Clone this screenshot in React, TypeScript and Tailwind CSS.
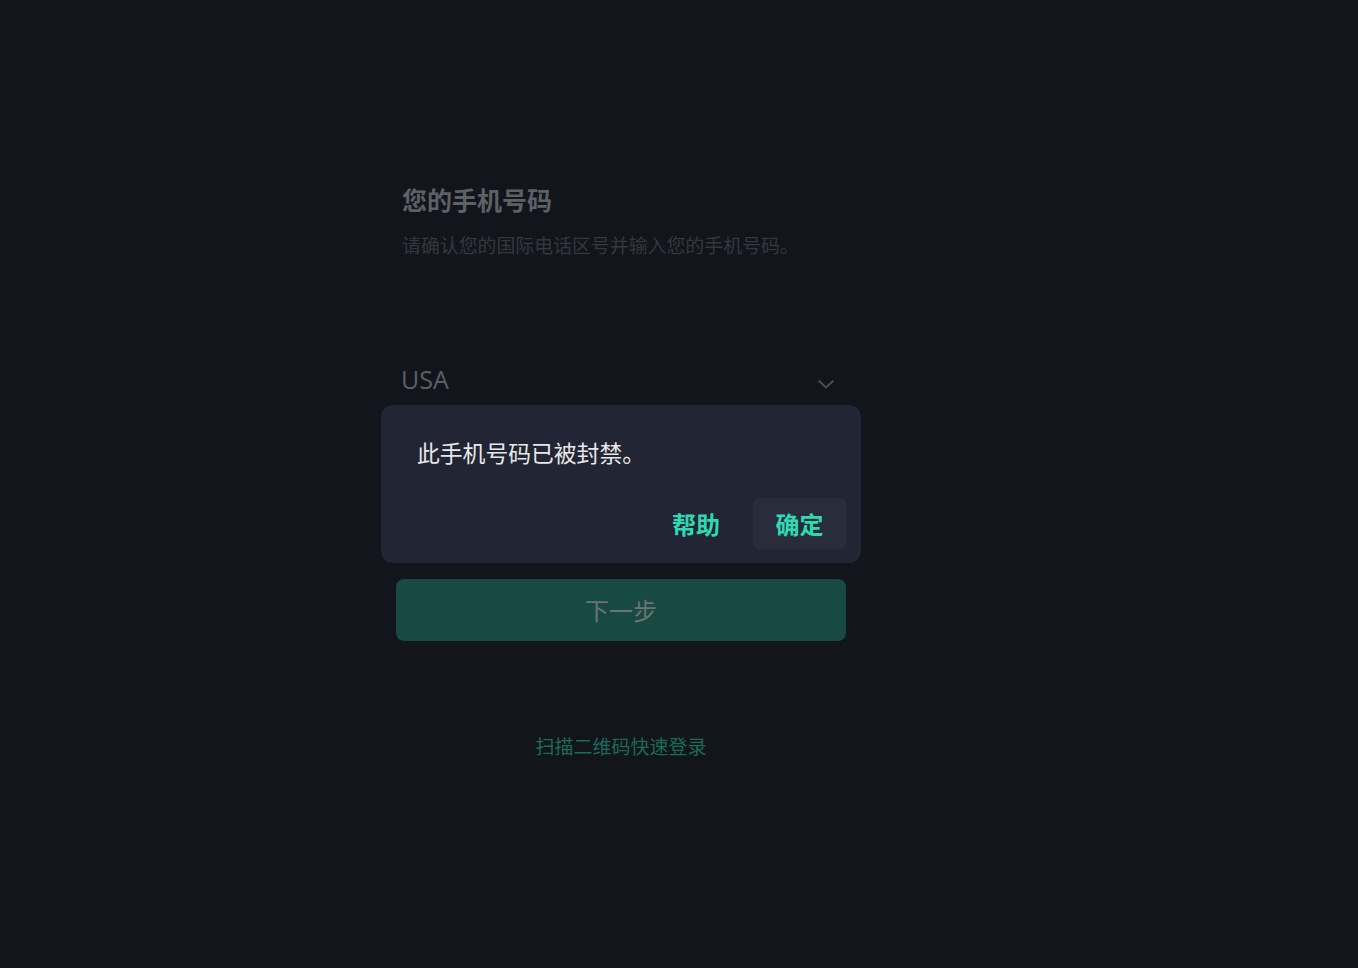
import React from 'react';

const cjk = "font-['Noto_Sans_CJK_SC','Microsoft_YaHei',sans-serif]";

const Chevron: React.FC = () => (
  <svg width="18" height="12" viewBox="0 0 18 12" fill="none" className="text-[#4b4e57]">
    <path d="M1.5 2.5 L9 9.5 L16.5 2.5" stroke="currentColor" strokeWidth="1.8" />
  </svg>
);

const BannedDialog: React.FC = () => (
  <div className="absolute left-[-15px] top-[45px] w-[480px] h-[158px] rounded-xl bg-[#222533] pl-9 pr-[15px] pt-[32px]">
    <p className={`${cjk} text-[22.8px] leading-[32px] text-[#e8e8ea]`}>此手机号码已被封禁。</p>
    <div className="mt-[29px] flex items-center justify-end gap-[4px]">
      <button className={`${cjk} h-[51px] px-[29px] rounded-md text-[24px] font-bold text-[#2fd9b2]`}>帮助</button>
      <button className={`${cjk} h-[51px] w-[93px] rounded-md bg-[#292c3a] text-[24px] font-bold text-[#2fd9b2]`}>确定</button>
    </div>
  </div>
);

export default function App() {
  return (
    <div className="min-h-[968px] w-full bg-[#12151c] flex justify-center">
      <div className="w-[450px] mr-[116px] pt-[182px] relative">
        <div className="pl-[6px]">
          <h1 className={`${cjk} text-[25px] leading-[34px] font-bold text-[#5e6066]`}>您的手机号码</h1>
          <p className={`${cjk} mt-[17px] text-[18.9px] leading-[24px] text-[#35373e]`}>
            请确认您的国际电话区号并输入您的手机号码。
          </p>
        </div>

        <div className="relative mt-[103px]">
          <div className="flex items-center justify-between pl-[5px] pr-[11px] h-[40px]">
            <span className="font-['Open_Sans',sans-serif] text-[25px] text-[#5c5f65]">USA</span>
            <span className="mt-[8px]"><Chevron /></span>
          </div>
          <div className="h-[179px]" />
          <BannedDialog />
        </div>

        <button className={`${cjk} w-full h-[62px] rounded-lg bg-[#164a42] text-[24px] text-[#6b7471]`}>
          下一步
        </button>

        <div className="mt-[93px] flex justify-center">
          <span className={`${cjk} text-[19px] leading-[24px] text-[#1b6b57]`}>扫描二维码快速登录</span>
        </div>
      </div>
    </div>
  );
}
